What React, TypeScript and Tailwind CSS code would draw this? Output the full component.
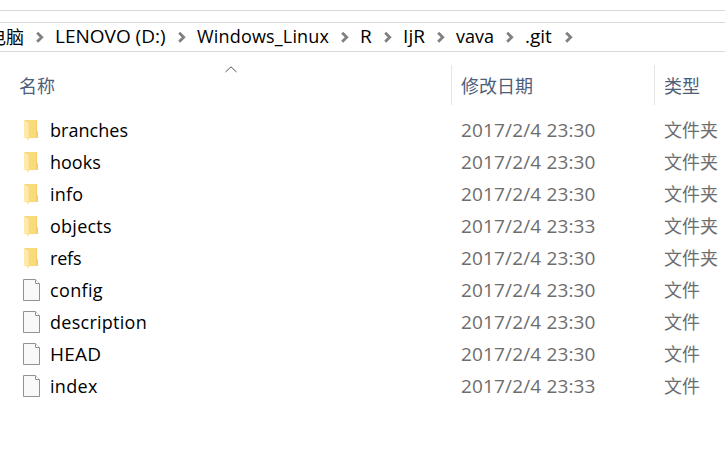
const LATIN = 'font-["Open_Sans","Noto_Sans_CJK_SC",sans-serif]';

type Entry = { name: string; date: string; folder: boolean; fit: string };

const entries: Entry[] = [
  { name: 'branches', date: '2017/2/4 23:30', folder: true, fit: 'tracking-[0.05px]' },
  { name: 'hooks', date: '2017/2/4 23:30', folder: true, fit: 'tracking-[0px]' },
  { name: 'info', date: '2017/2/4 23:30', folder: true, fit: 'tracking-[0.2px]' },
  { name: 'objects', date: '2017/2/4 23:33', folder: true, fit: 'tracking-[0.25px]' },
  { name: 'refs', date: '2017/2/4 23:30', folder: true, fit: 'tracking-[-0.2px]' },
  { name: 'config', date: '2017/2/4 23:30', folder: false, fit: 'tracking-[0.35px]' },
  { name: 'description', date: '2017/2/4 23:30', folder: false, fit: 'tracking-[0.27px]' },
  { name: 'HEAD', date: '2017/2/4 23:30', folder: false, fit: 'text-[19px] tracking-[0.2px]' },
  { name: 'index', date: '2017/2/4 23:33', folder: false, fit: 'tracking-[0.3px]' },
];

const crumbs = [
  { label: 'LENOVO (D:)', box: 'w-[142px]', fit: 'text-[19px] tracking-[0px]' },
  { label: 'Windows_Linux', box: 'w-[163px]', fit: 'tracking-[0.17px]' },
  { label: 'R', box: 'w-[43px]', fit: 'text-[19px] tracking-[0px]' },
  { label: 'IjR', box: 'w-[53px]', fit: 'text-[19px] tracking-[0.1px]' },
  { label: 'vava', box: 'w-[69px]', fit: 'tracking-[0px]' },
  { label: '.git', box: 'w-[59px]', fit: 'text-[19px] tracking-[0px]' },
];

function Chevron() {
  return (
    <svg className="mr-[10px] h-[12px] w-[10px] shrink-0" viewBox="0 0 10 12" fill="none" stroke="#808080" strokeWidth="2.8">
      <path d="M2.2 1.7 L6.7 6.2 L2.2 10.7" />
    </svg>
  );
}

function FolderIcon() {
  return (
    <svg className="h-6 w-[18px]" viewBox="0 0 18 24">
      <path d="M1 2 H14 V13 L15 14 V20 H1 Z" fill="#f9da7c" />
      <path d="M13 2 H14 V13 L15 14 V20 H13 Z" fill="#f4cf6e" />
      <path d="M1 2 L6 5.5 V22.5 L1 19.5 Z" fill="#ffeaab" />
      <path d="M5.5 5 V22" stroke="#fbe196" />
    </svg>
  );
}

function FileIcon() {
  return (
    <svg className="h-6 w-[18px]" viewBox="0 0 18 24">
      <path d="M.5 1.5 H12.5 L16.5 5.5 V22.5 H.5 Z" fill="#f8f9fa" stroke="#929292" />
      <path d="M12.5 1.5 V5.5 H16.5" fill="#fff" stroke="#929292" />
    </svg>
  );
}

export default function App() {
  return (
    <div className={`h-[453px] w-[725px] overflow-hidden bg-white text-[18px] ${LATIN}`}>
      <div className="h-[11px] border-b border-[#d9d9d9]" />
      <div className="mt-[11px] flex h-[30px] items-center overflow-hidden border-y border-[#d9d9d9] leading-[28px] text-black">
        <div className="flex w-[55px] shrink-0 items-center justify-between">
          <span className="-ml-3 -mt-px whitespace-nowrap">电脑</span>
          <Chevron />
        </div>
        {crumbs.map((c) => (
          <div key={c.label} className={`flex shrink-0 items-center justify-between ${c.box}`}>
            <span className={`-mt-0.5 whitespace-nowrap ${c.fit}`}>{c.label}</span>
            <Chevron />
          </div>
        ))}
      </div>
      <div className="mt-[13px] flex h-10 leading-[42px] text-[#4c607a]">
        <div className="flex w-[451px] pl-[19px]">
          <span className="w-[206px]">名称</span>
          <svg className="mt-px h-[7px] w-[12px]" viewBox="0 0 12 7" fill="none" stroke="#555">
            <path d="M.5 6 L6 .8 L11.5 6" />
          </svg>
        </div>
        <div className="w-[203px] border-l border-[#e5e5e5] pl-[9px]">修改日期</div>
        <div className="border-l border-[#e5e5e5] pl-[9px]">类型</div>
      </div>
      <div className="mt-[9px]">
        {entries.map((e) => (
          <div key={e.name} className="flex h-8 items-center whitespace-nowrap leading-8 text-[#6d6d6d]">
            <div className="flex w-[461px] items-center pl-[23px] text-black">
              {e.folder ? <FolderIcon /> : <FileIcon />}
              <span className={`ml-[9px] ${e.fit}`}>{e.name}</span>
            </div>
            <span className="w-[203px] text-[19px] tracking-[0.15px]">{e.date}</span>
            <span>{e.folder ? '文件夹' : '文件'}</span>
          </div>
        ))}
      </div>
    </div>
  );
}
